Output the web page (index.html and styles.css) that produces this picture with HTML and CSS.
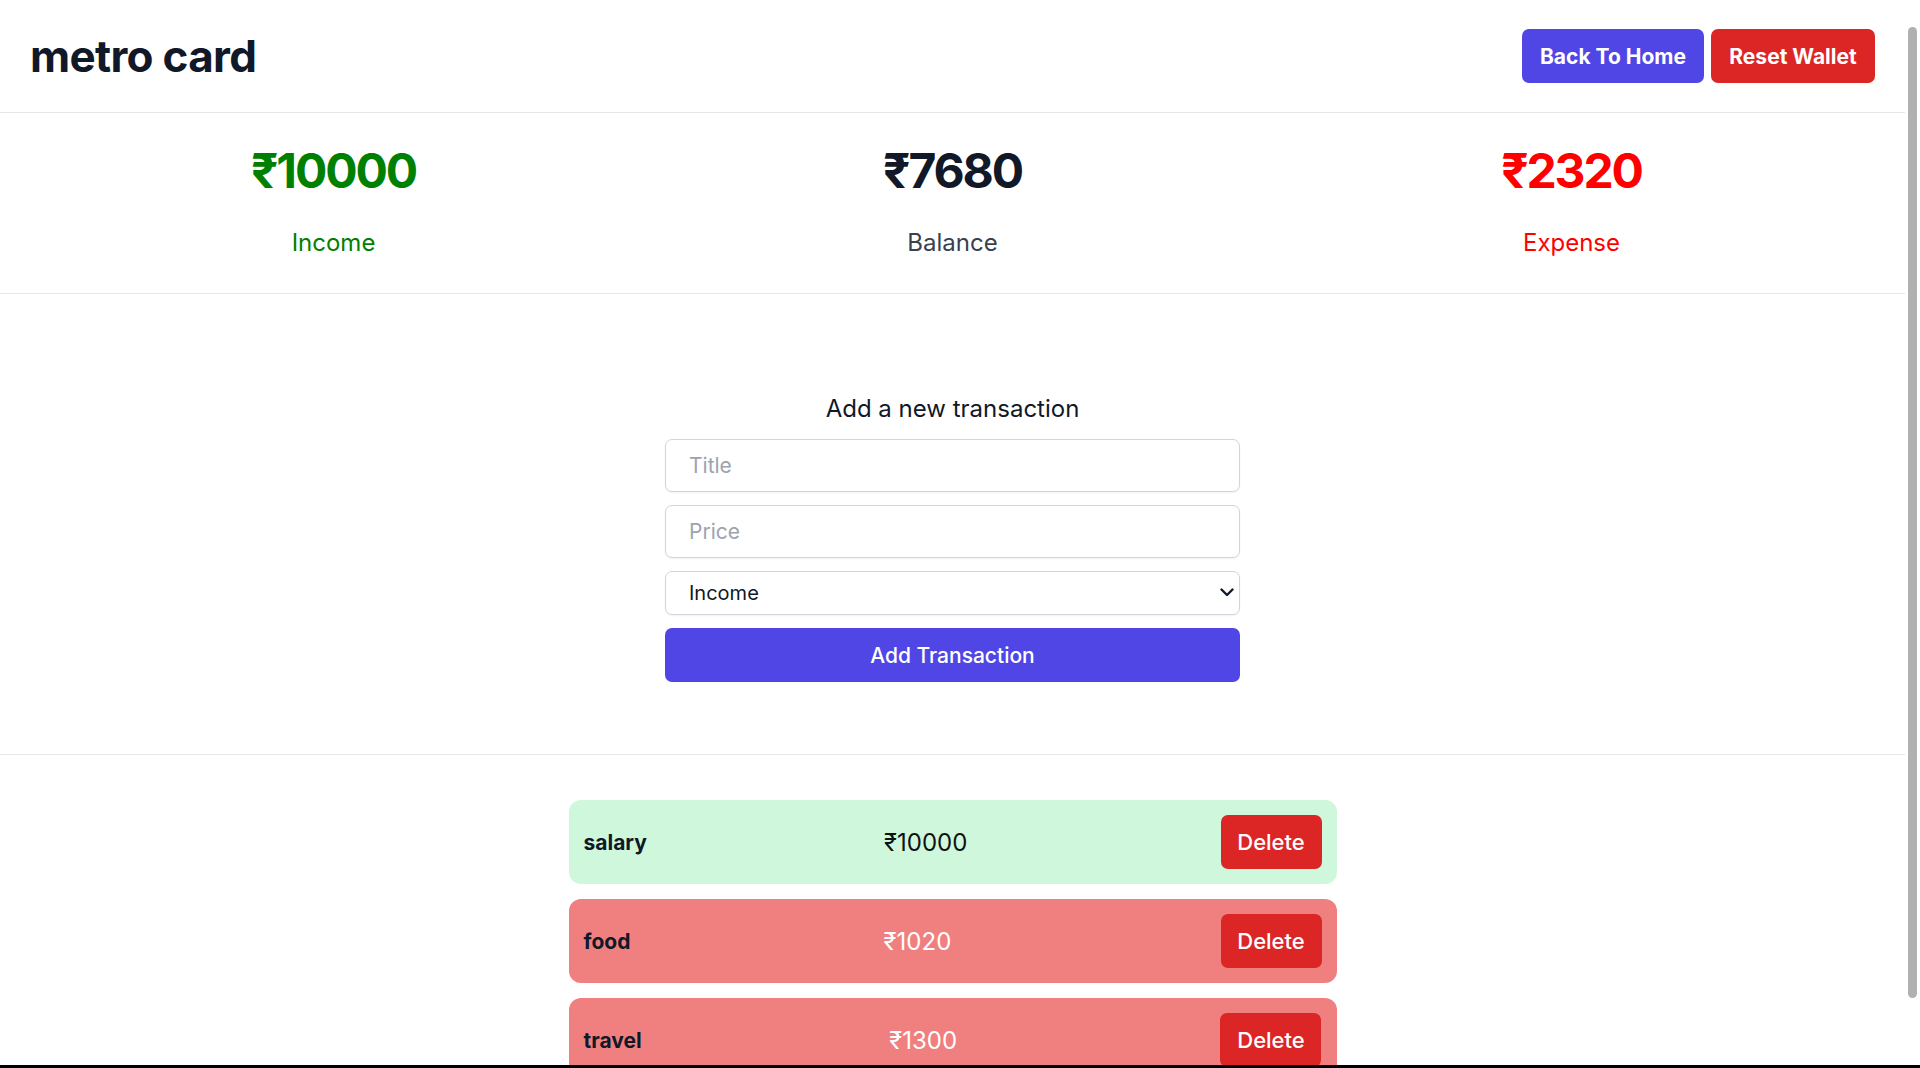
FILE: index.html
```html
<!DOCTYPE html>
<html lang="en">
<head>
<meta charset="utf-8">
<title>metro card</title>
<link rel="stylesheet" href="styles.css">
</head>
<body>
<div class="page">
  <div class="viewport">
    <div class="content">
      <header class="topbar">
        <h1 class="brand">metro card</h1>
        <div class="actions">
          <button class="btn btn-indigo">Back To Home</button>
          <button class="btn btn-red">Reset Wallet</button>
        </div>
      </header>

      <section class="stats">
        <div class="stat">
          <div class="stat-amount income">₹10000</div>
          <div class="stat-label income">Income</div>
        </div>
        <div class="stat">
          <div class="stat-amount balance">₹7680</div>
          <div class="stat-label balance-label">Balance</div>
        </div>
        <div class="stat">
          <div class="stat-amount expense">₹2320</div>
          <div class="stat-label expense">Expense</div>
        </div>
      </section>

      <section class="form-section">
        <form class="tx-form">
          <h2 class="form-title">Add a new transaction</h2>
          <input class="field" type="text" placeholder="Title">
          <input class="field" type="text" placeholder="Price">
          <div class="select-wrap">
            <select class="field select">
              <option>Income</option>
              <option>Expense</option>
            </select>
            <svg class="chevron" width="14" height="9" viewBox="0 0 14 9" aria-hidden="true">
              <path d="M1.5 1.5 L7 7 L12.5 1.5" fill="none" stroke="#111827" stroke-width="2.4" stroke-linecap="round" stroke-linejoin="round"/>
            </svg>
          </div>
          <button type="button" class="submit">Add Transaction</button>
        </form>
      </section>

      <section class="list">
        <div class="tx tx-income">
          <span class="tx-title">salary</span>
          <span class="tx-amount">₹10000</span>
          <button class="tx-delete">Delete</button>
        </div>
        <div class="tx tx-expense">
          <span class="tx-title">food</span>
          <span class="tx-amount">₹1020</span>
          <button class="tx-delete">Delete</button>
        </div>
        <div class="tx tx-expense">
          <span class="tx-title">travel</span>
          <span class="tx-amount">₹1300</span>
          <button class="tx-delete">Delete</button>
        </div>
      </section>
    </div>
    <div class="rail" aria-hidden="true">
      <div class="thumb"></div>
    </div>
  </div>
  <div class="bottom-edge"></div>
</div>
</body>
</html>
```

FILE: styles.css
```css
* { box-sizing: border-box; }

html, body {
  margin: 0;
  padding: 0;
  height: 100%;
  overflow: hidden;
  background: #ffffff;
  font-family: Inter, "Noto Sans", "DejaVu Sans", sans-serif;
  color: #111827;
}

.page {
  height: 100vh;
  display: flex;
  flex-direction: column;
}

.viewport {
  flex: 1;
  min-height: 0;
  display: flex;
}

.content {
  flex: 1;
  min-width: 0;
  overflow: hidden;
}

/* scrollbar rail drawn as in the screenshot */
.rail {
  flex: none;
  width: 15px;
  background: #ffffff;
  padding-top: 27px;
}
.thumb {
  width: 9px;
  height: 971px;
  margin-left: 3px;
  border-radius: 5px;
  background: #b0b0b0;
}

.bottom-edge {
  height: 3px;
  background: #000000;
  flex: none;
}

/* header */
.topbar {
  height: 113px;
  padding: 0 30px;
  display: flex;
  align-items: center;
  justify-content: space-between;
  border-bottom: 1px solid #e5e7eb;
}

.brand {
  margin: 0;
  font-size: 44px;
  font-weight: 700;
  letter-spacing: -0.7px;
  color: #111827;
}

.actions {
  display: flex;
  gap: 7px;
}

.btn {
  height: 54px;
  border: none;
  border-radius: 7px;
  color: #ffffff;
  font-family: inherit;
  font-size: 21px;
  font-weight: 700;
  padding: 0;
  cursor: pointer;
}
.btn-indigo { background: #4f46e5; width: 182px; }
.btn-red { background: #dc2626; width: 164px; }

/* stats */
.stats {
  height: 181px;
  padding: 34px 24px 0;
  display: grid;
  grid-template-columns: repeat(3, 1fr);
  border-bottom: 1px solid #e5e7eb;
}

.stat {
  display: flex;
  flex-direction: column;
  align-items: center;
}

.stat-amount {
  font-size: 48px;
  line-height: 48px;
  font-weight: 700;
  letter-spacing: -2.1px;
}

.stat-label {
  margin-top: 32px;
  font-size: 24px;
  line-height: 32px;
}

.income { color: #008000; }
.expense { color: #ff0000; }
.balance { color: #111827; }
.balance-label { color: #374151; }

/* form */
.form-section {
  padding: 98px 0 72px;
  border-bottom: 1px solid #e5e7eb;
  display: flex;
  justify-content: center;
}

.tx-form {
  width: 575px;
  display: flex;
  flex-direction: column;
  gap: 13px;
}

.form-title {
  margin: 0 0 1px;
  text-align: center;
  font-size: 24px;
  line-height: 33px;
  font-weight: 400;
  color: #111827;
}

.field {
  width: 100%;
  height: 53px;
  border: 1px solid #d1d5db;
  border-radius: 7px;
  padding: 0 23px;
  font-family: inherit;
  font-size: 21px;
  color: #111827;
  background: #ffffff;
  box-shadow: 0 1px 2px rgba(0, 0, 0, 0.05);
  outline: none;
}
.field::placeholder { color: #9ca3af; }

.select-wrap {
  position: relative;
}

.select {
  display: block;
  height: 44px;
  font-size: 20px;
  padding: 0 40px 0 23px;
  appearance: none;
  -webkit-appearance: none;
}

.chevron {
  position: absolute;
  right: 6px;
  top: 17px;
  pointer-events: none;
}

.submit {
  height: 54px;
  border: none;
  border-radius: 7px;
  background: #4f46e5;
  color: #ffffff;
  font-family: inherit;
  font-size: 21px;
  font-weight: 500;
  cursor: pointer;
}

/* list */
.list {
  padding: 45px 0 27px;
  display: flex;
  flex-direction: column;
  align-items: center;
  gap: 15px;
}

.tx {
  flex: none;
  width: 768px;
  height: 84px;
  padding: 15px;
  border-radius: 12px;
  display: flex;
  align-items: center;
  justify-content: space-between;
}

.tx-income { background: #cef7dc; }
.tx-expense { background: #f08080; }

.tx-title {
  font-size: 21px;
  font-weight: 700;
  color: #111827;
}

.tx-amount {
  font-size: 24px;
  color: #111111;
}
.tx-expense .tx-amount { color: #ffffff; }

.tx-delete {
  margin-left: 16px;
  height: 54px;
  width: 101px;
  border: none;
  border-radius: 7px;
  background: #dc2626;
  color: #ffffff;
  font-family: inherit;
  font-size: 22px;
  font-weight: 500;
  cursor: pointer;
}
```
